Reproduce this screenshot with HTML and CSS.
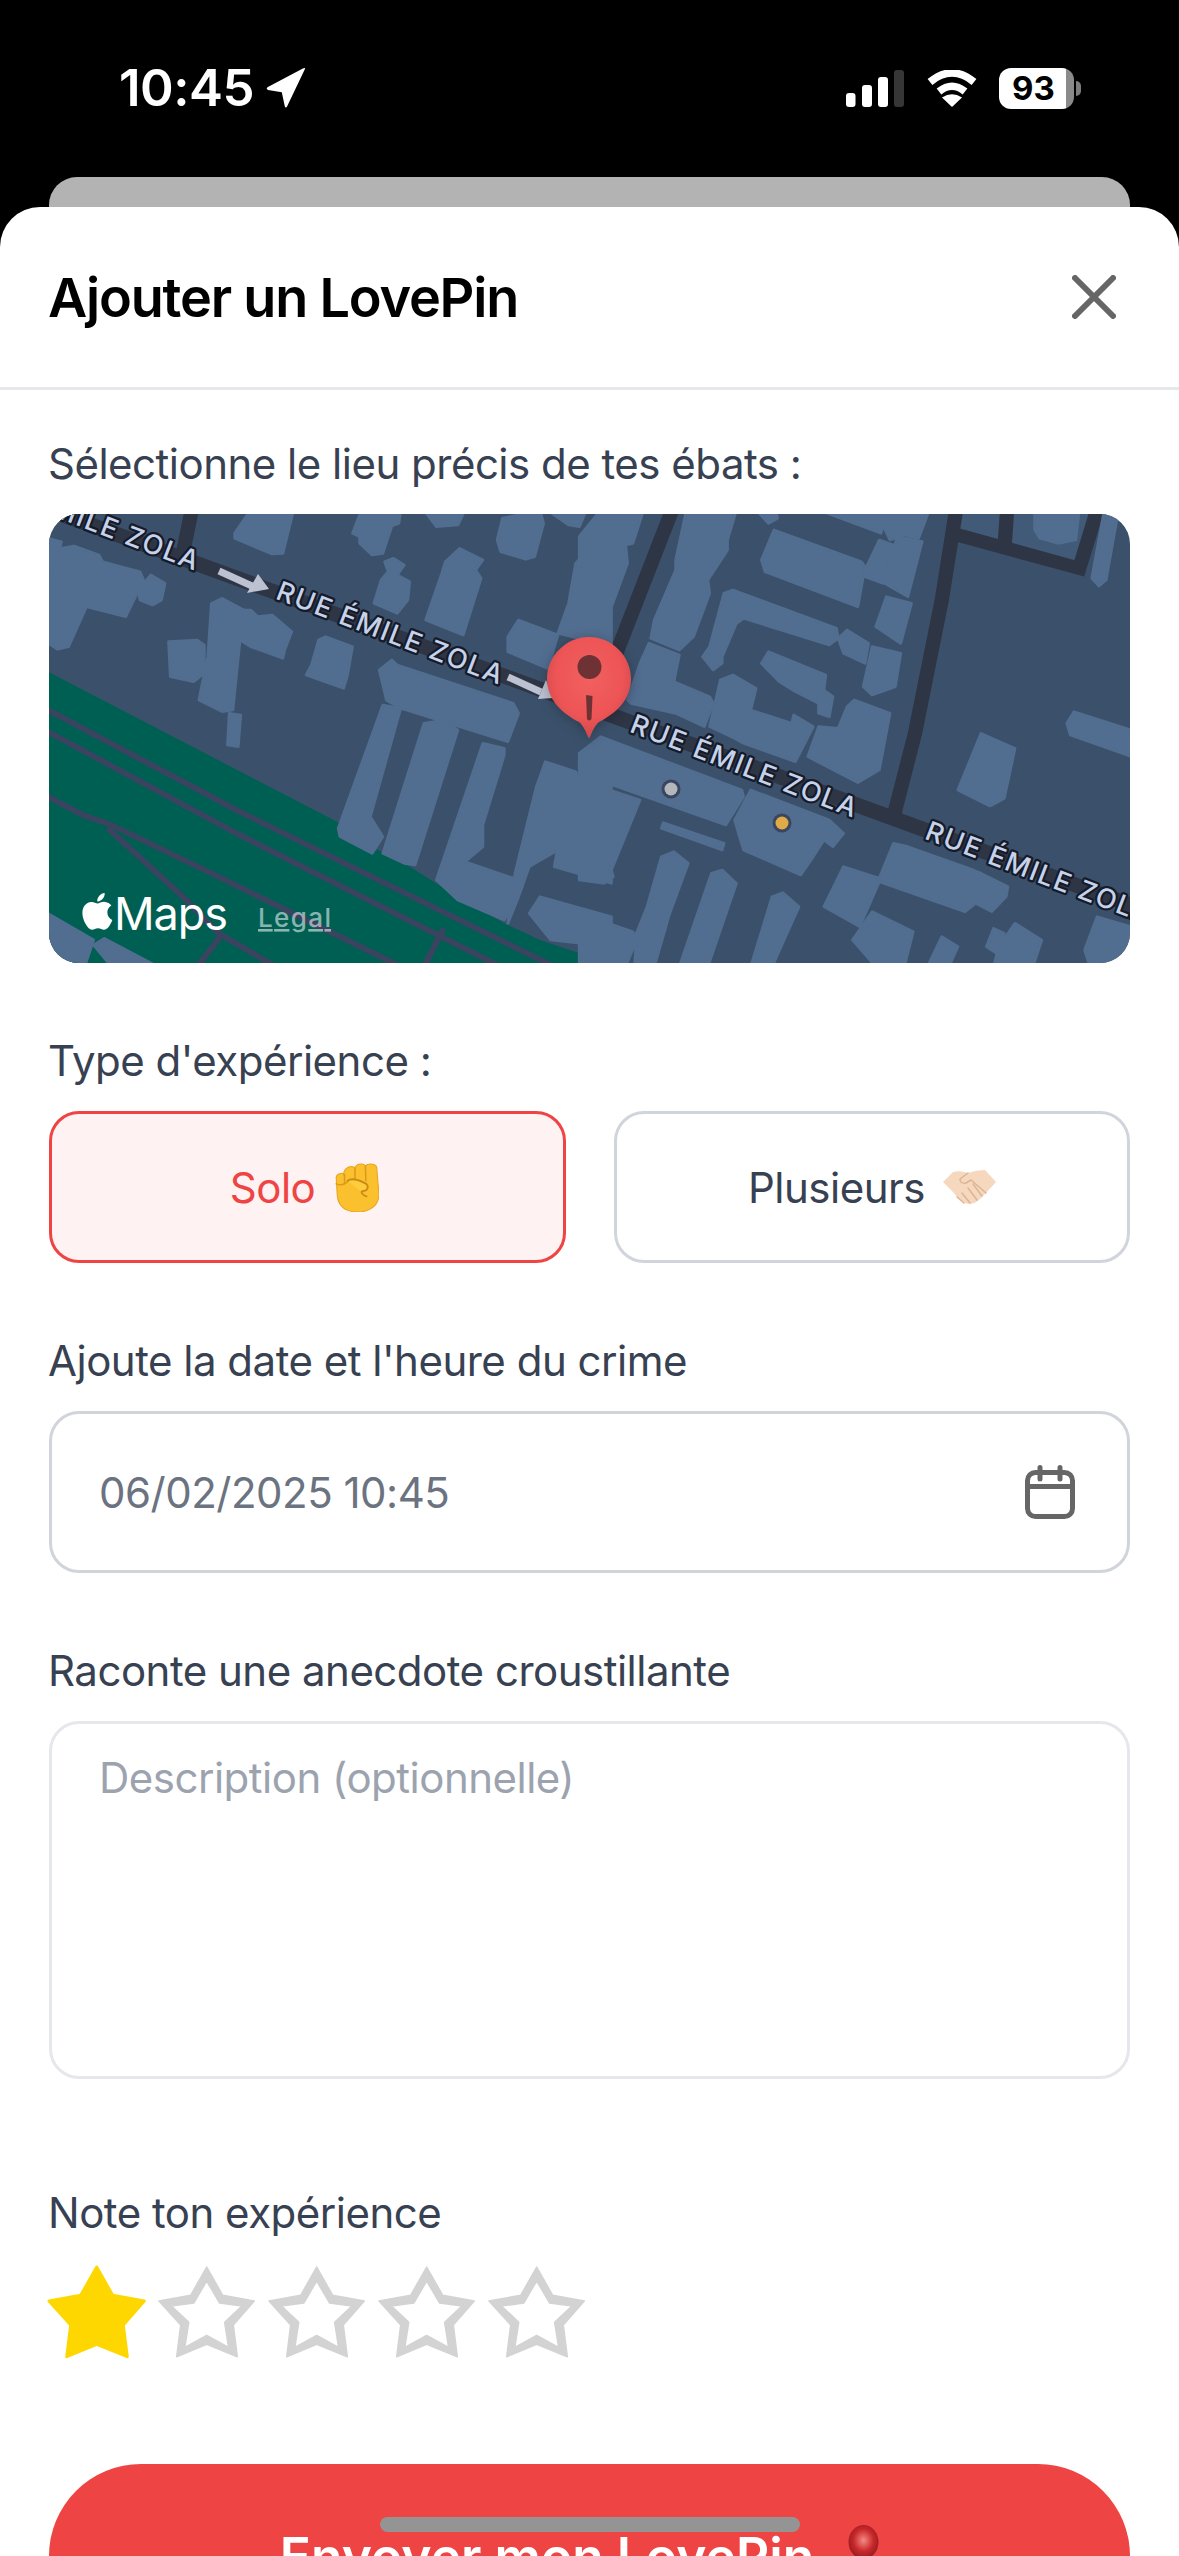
FILE: index.html
```html
<!DOCTYPE html>
<html lang="fr">
<head>
<meta charset="utf-8">
<title>Ajouter un LovePin</title>
<link rel="stylesheet" href="styles.css">
</head>
<body>
<svg class="defs" width="0" height="0" aria-hidden="true">
  <symbol id="star-full" viewBox="-2 -2 102 96">
    <path d="M48.7 1 L64.7 29.3 L96.3 35 L75.3 59 L79.3 90.7 L48.7 78.3 L18.7 90.7 L22.7 59 L1 35 L32.7 29.3Z" stroke-width="3" stroke-linejoin="round"/>
  </symbol>
  <symbol id="star-empty" viewBox="-2 -2 102 96">
    <path fill-rule="evenodd" stroke-width="1.500" stroke-linejoin="round" d="M48.7 1 L64.7 29.3 L96.3 35 L75.3 59 L79.3 90.7 L48.7 78.3 L18.7 90.7 L22.7 59 L1 35 L32.7 29.3Z M48.7 15 L35.8 37 L13.5 40 L30.8 56.2 L26.8 81.5 L48.7 69.5 L70.6 81.5 L66.6 56.2 L83.9 40 L61.6 37Z"/>
  </symbol>
</svg>
<div class="phone">
  <header class="status">
    <div class="status-left">
      <span class="clock">10:45</span>
      <svg class="loc" viewBox="0 0 38 38"><path d="M37 1 L20 36.5 Q18.6 38.6 17.8 36 L15 23 L2 21 Q-.5 19.6 1.8 18 L35 .5 Q38 -.6 37 1Z"/></svg>
    </div>
    <div class="status-right">
      <svg class="signal" viewBox="0 0 58 37">
        <rect class="on" x="0" y="23" width="9.500" height="14" rx="3"/>
        <rect class="on" x="16" y="15" width="10" height="22" rx="3"/>
        <rect class="on" x="32" y="7" width="10" height="30" rx="3"/>
        <rect class="off" x="48" y="0" width="10" height="37" rx="3"/>
      </svg>
      <svg class="wifi" viewBox="0 0 50 37">
        <path class="wifi-arc" d="M3 12 Q25 -6 47 12"/>
        <path class="wifi-arc" d="M12 21.500 Q25 11 38 21.500"/>
        <path class="wifi-dot" d="M25 37 L15 27.500 Q25 21 35 27.500Z"/>
      </svg>
      <div class="battery"><span class="battery-level">93</span></div>
    </div>
  </header>
  <div class="back-card"></div>
  <main class="sheet">
    <div class="sheet-head">
      <h1 class="title">Ajouter un LovePin</h1>
      <svg class="close" viewBox="0 0 44 44"><path d="M3 3 L41 41 M41 3 L3 41"/></svg>
    </div>
    <div class="form">
      <label class="label">Sélectionne le lieu précis de tes ébats :</label>
      <div class="map">
        <svg class="map-svg" viewBox="0 0 1081 449">
          <rect class="m-ground" width="1081" height="449"/>
          <g transform="translate(-9,-14) scale(.35714,.33333)">
            <path class="m-green" d="M22 515 L840 970 L835 990 L1020 1090 L1170 1190 L1300 1270 L1400 1320 L1568 1380 L1780 1440 L22 1440Z"/>
            <path class="m-rail" d="M22 630 L550 930 L1440 1400"/>
            <path class="m-rail" d="M22 695 L550 1000 L1290 1400"/>
            <path class="m-rail" d="M22 890 L120 945 L200 975 L500 1130 L1010 1400"/>
            <path class="m-rail" d="M190 985 L400 1190 L500 1300 L660 1400"/>
            <path class="m-rail" d="M440 1400 L505 1310"/>
            <path class="m-rail" d="M1130 1285 L1075 1400"/>
            <path class="m-road" d="M425 30 L400 160"/>
          </g>
          <g transform="translate(541,-14) scale(.35714,.33333)">
            <path class="m-lot" d="M1040 40 H1420 L1380 215 L1030 100Z"/>
            <path class="m-road" d="M230 30 L70 470"/>
            <path class="m-road" d="M1025 30 L985 300 L910 700 L850 950"/>
            <path class="m-road" d="M1030 105 L1370 205 L1420 30"/>
            <path class="m-road" d="M1168 30 L1160 150"/>
          </g>
          <path class="m-main" d="M-10 -8 L1095 396"/>
          <g class="m-b" transform="translate(-9,-14) scale(.35714,.33333)">
            <polygon points="545,100 590,30 710,30 680,160 650,162 545,115"/>
            <polygon points="875,100 900,30 1010,30 1005,70 985,78 960,160 930,165 895,130 895,110"/>
            <polygon points="1075,30 1190,30 1170,75 1110,80"/>
            <polygon points="1280,120 1295,55 1400,30 1410,70 1385,170 1360,178 1290,155"/>
            <polygon points="1420,30 1530,30 1510,80 1480,75"/>
            <polygon points="22,115 60,125 40,210 22,225"/>
            <polygon points="22,230 60,145 95,138 165,165 175,185 280,215 290,240 240,350 130,320 80,440 50,448 22,430"/>
            <polygon points="275,270 310,225 350,250 340,300 315,315 280,300"/>
            <polygon points="965,185 990,175 1020,195 1000,225 1035,245 1030,300 1000,340 935,310 955,240 975,215"/>
            <polygon points="1135,185 1175,145 1240,180 1220,210 1235,235 1185,405 1080,360 1125,220"/>
            <polygon points="1310,410 1340,360 1450,405 1430,480 1420,505 1310,455"/>
            <polygon points="1480,310 1500,190 1568,110 1600,110 1600,440 1450,400"/>
            <polygon points="480,310 510,295 570,330 590,330 610,350 650,345 705,395 685,450 680,475 590,440 560,420 540,630 510,635 445,600 470,470"/>
            <polygon points="360,425 440,420 460,435 460,520 430,545 365,530"/>
            <polygon points="760,495 780,420 800,410 875,440 860,530 850,565 745,525"/>
            <polygon points="530,640 562,645 555,740 525,735"/>
            <polygon points="950,510 985,480 1000,495 1325,610 1340,640 1310,725 1010,625 970,600"/>
            <polygon points="960,615 1010,625 925,950 960,1010 930,1060 840,1010 835,985"/>
            <polygon points="1075,670 1130,660 1170,690 1050,1095 1020,1090 960,1060"/>
            <polygon points="1240,730 1300,745 1300,765 1240,975 1240,1040 1190,1085 1340,1140 1350,1160 1300,1260 1170,1200 1110,1140"/>
            <polygon points="1370,1240 1400,1190 1600,1250 1600,1340 1430,1320"/>
            <polygon points="1390,860 1415,785 1500,815 1510,840 1450,1050 1370,1100 1340,1190 1310,1270 1330,1120"/>
            <polygon points="1500,830 1600,800 1600,1150 1440,1100 1450,1040"/>
            <polygon points="22,1240 150,1320 125,1400 22,1400"/>
            <polygon points="150,1335 180,1315 330,1400 200,1400"/>
          </g>
          <g class="m-b" transform="translate(541,-14) scale(.35714,.33333)">
            <polygon points="-30,110 30,30 150,30 120,130 100,135 105,190 50,350 30,370 -30,350"/>
            <polygon points="270,30 410,30 385,120 385,150 330,240 335,280 290,410 250,450 170,415 180,360 240,210 240,180"/>
            <polygon points="140,490 165,430 250,465 235,545 335,590 345,610 320,680 240,640 115,610 105,600"/>
            <polygon points="480,180 515,90 760,185 770,200 750,320 490,215"/>
            <polygon points="770,210 810,120 850,135 820,250 770,230"/>
            <polygon points="825,250 860,110 930,125 890,290"/>
            <polygon points="800,380 830,290 900,310 870,430"/>
            <polygon points="765,560 790,440 870,460 855,560 790,585"/>
            <polygon points="335,440 375,280 400,270 690,385 695,415 670,435 430,355 410,370 370,470 370,490 345,510 315,470"/>
            <polygon points="695,415 720,390 780,430 770,490 710,460"/>
            <polygon points="480,490 500,455 660,525 655,570 680,590 670,650 640,640 640,610 575,575 530,545"/>
            <polygon points="335,680 365,540 400,525 465,565 450,630 565,670 570,645 625,680 575,785 430,730 405,715"/>
            <polygon points="610,770 640,680 695,685 720,620 740,600 840,640 810,810 750,848"/>
            <polygon points="1030,870 1095,700 1190,745 1160,895 1120,918"/>
            <polygon points="1335,670 1355,635 1530,695 1530,775 1345,705"/>
            <polygon points="1245,90 1245,30 1370,30 1360,120 1310,130 1260,115"/>
            <polygon points="465,30 520,30 525,55 500,70"/>
            <polygon points="820,75 830,30 950,30 920,115 880,105 840,120"/>
            <polygon points="640,30 830,30 815,100"/>
            <polygon points="1405,235 1440,30 1480,30 1445,240 1425,258"/>
            <polygon points="-30,760 30,710 425,870 430,890 380,975 -30,820"/>
            <polygon points="405,960 450,870 670,960 710,1000 680,1040 655,1020 625,1070 590,1125 430,1050 420,1015"/>
            <polygon points="-30,840 140,900 60,1110 65,1130 40,1150 -30,1140"/>
            <polygon points="205,968 375,1030 370,1050 200,985"/>
            <polygon points="160,1220 200,1070 235,1055 275,1090 220,1250 210,1290 180,1400 125,1400 130,1300"/>
            <polygon points="250,1400 340,1120 370,1110 410,1150 330,1400"/>
            <polygon points="450,1400 510,1190 540,1178 585,1220 510,1400"/>
            <polygon points="-30,1240 120,1295 130,1320 100,1400 -30,1400"/>
            <polygon points="655,1220 710,1100 810,1135 850,1030 890,1040 1060,1105 1095,1120 1170,1160 1165,1190 1125,1235 1080,1210 1050,1235 810,1145 755,1280"/>
            <polygon points="735,1320 790,1235 905,1295 880,1400 800,1400"/>
            <polygon points="945,1400 985,1310 1030,1340 1005,1400"/>
            <polygon points="1110,1340 1130,1285 1160,1300 1145,1365"/>
            <polygon points="1145,1340 1190,1270 1265,1320 1240,1400 1130,1400"/>
            <polygon points="1385,1350 1420,1250 1530,1285 1530,1400 1400,1400"/>
          </g>
          <path class="m-arrow-line" d="M170 57 L203 72"/>
          <polygon class="m-arrow" points="209,60 220,75 198,79"/>
          <path class="m-arrow-line" d="M459 163 L492 178"/>
          <polygon class="m-arrow" points="497,166 504,184 489,185"/>
          <text class="m-label" transform="translate(148,50) rotate(21)" text-anchor="end" textLength="240" dy="7">RUE ÉMILE ZOLA</text>
          <text class="m-label" transform="translate(228,78) rotate(21)" textLength="240" dy="7">RUE ÉMILE ZOLA</text>
          <text class="m-label" transform="translate(582,211) rotate(21)" textLength="240" dy="7">RUE ÉMILE ZOLA</text>
          <text class="m-label" transform="translate(877,318) rotate(21)" textLength="240" dy="7">RUE ÉMILE ZOLA</text>
          <circle class="m-dot-ring" cx="622" cy="275" r="9.500"/>
          <circle class="m-dot-grey" cx="622" cy="275" r="6.500"/>
          <circle class="m-dot-ring" cx="733" cy="309" r="9.500"/>
          <circle class="m-dot-gold" cx="733" cy="309" r="6.500"/>
          <defs>
            <radialGradient id="pinfill" cx=".5" cy=".4" r=".62">
              <stop offset="0" stop-color="#f2605f"/>
              <stop offset=".65" stop-color="#ed5456"/>
              <stop offset="1" stop-color="#c9474a"/>
            </radialGradient>
          </defs>
          <path class="m-pin" d="M540 123 C563 123 582 142 582 165 C582 186 566 200 550 208 C546 211 543 218 541 223 Q540 225 539 223 C537 218 534 211 530 208 C514 200 498 186 498 165 C498 142 517 123 540 123Z"/>
          <circle class="m-pin-dark" cx="540.500" cy="153" r="12"/>
          <path class="m-pin-dark" d="M537 181 L543.500 182 L542.500 205 Q540 208 538 205Z"/>
          <path class="m-apple" transform="translate(30,379) scale(1.530)" d="M12.152 6.896c-.948 0-2.415-1.078-3.96-1.04-2.04.027-3.91 1.183-4.961 3.014-2.117 3.675-.546 9.103 1.519 12.09 1.013 1.454 2.208 3.09 3.792 3.039 1.52-.065 2.09-.987 3.935-.987 1.831 0 2.35.987 3.96.948 1.637-.026 2.676-1.48 3.676-2.948 1.156-1.688 1.636-3.325 1.662-3.415-.039-.013-3.182-1.221-3.22-4.857-.026-3.04 2.48-4.494 2.597-4.559-1.429-2.09-3.623-2.324-4.39-2.376-2-.156-3.675 1.090-4.61 1.090zM15.530 3.830c.843-1.012 1.400-2.427 1.245-3.830-1.207.052-2.662.805-3.532 1.818-.78.896-1.454 2.338-1.273 3.714 1.338.104 2.715-.688 3.559-1.701"/>
          <text class="m-maps" x="65" y="416" textLength="114">Maps</text>
          <text class="m-legal" x="209" y="413" textLength="73">Legal</text>
        </svg>
      </div>

      <label class="label label-gap">Type d'expérience :</label>
      <div class="choices">
        <button class="choice choice-on" type="button">
          <span>Solo</span>
          <svg class="fist" viewBox="0 0 44 47">
            <path class="f-base" d="M3 14 C3 10 9 9 10 11 C11 3 19 2 21 5 C22 0 30 0 31 3 C33 0 43 0 42 6 L44 30 C44 41 35 47 24 47 C12 47 5 42 4 31Z"/>
            <path class="f-line" d="M11 11 L11 20 M21 5 L21 17 M31 3 L31.500 17 M3 20 C8 22 12 20 14 18"/>
            <path class="f-thumb" d="M14 17 C18 14 24 16 30 19 C35 21 34 27 28 27 C26 28 29 31 32 32"/>
          </svg>
        </button>
        <button class="choice" type="button">
          <span>Plusieurs</span>
          <svg class="shake" viewBox="0 0 53 35">
            <path class="s-base" d="M0 12 L10 2 Q17 0 25 3 Q33 0 42 0 L53 12 L43 23 L37 29 Q30 36 22 33 L15 28 L10 22Z"/>
            <path class="s-line" d="M25 3 L17 9 Q17 14 23 13 L28 10 L43 23 M30 14 L39 26 M25 18 L34 30 M19 23 L27 33 M14 27 L21 33"/>
          </svg>
        </button>
      </div>

      <label class="label label-gap">Ajoute la date et l'heure du crime</label>
      <div class="field field-date">
        <span class="date-value">06/02/2025 10:45</span>
        <svg class="calendar" viewBox="0 0 50 54">
          <rect x="2.500" y="7.500" width="45" height="44" rx="8"/>
          <path d="M2.500 21.500 H47.500 M15 2.500 V14 M35 2.500 V14"/>
        </svg>
      </div>

      <label class="label label-gap">Raconte une anecdote croustillante</label>
      <div class="field field-area">Description (optionnelle)</div>

      <label class="label label-note">Note ton expérience</label>
      <div class="stars">
        <svg class="star star-on"><use href="#star-full"/></svg>
        <svg class="star star-off"><use href="#star-empty"/></svg>
        <svg class="star star-off"><use href="#star-empty"/></svg>
        <svg class="star star-off"><use href="#star-empty"/></svg>
        <svg class="star star-off"><use href="#star-empty"/></svg>
      </div>

      <button class="submit" type="button">
        <span>Envoyer mon LovePin</span>
        <svg class="pushpin" viewBox="0 0 31 62">
          <defs>
            <radialGradient id="ball" cx=".5" cy=".45" r=".6">
              <stop offset="0" stop-color="#f58a84"/>
              <stop offset=".55" stop-color="#c9282b"/>
              <stop offset="1" stop-color="#8a1a1e"/>
            </radialGradient>
          </defs>
          <rect x="13.500" y="28" width="4" height="30" fill="#8f8f8f"/>
          <ellipse cx="15.500" cy="17" rx="15" ry="17" fill="url(#ball)"/>
        </svg>
      </button>
    </div>
  </main>
  <div class="home-bar"></div>
</div>
</body>
</html>
```
FILE: styles.css
```css
* { box-sizing: border-box; }
html, body { margin: 0; padding: 0; background: #000; }
body { font-family: "Inter", "Liberation Sans", sans-serif; }
.defs { position: absolute; }
.phone { position: relative; width: 1179px; height: 2556px; overflow: hidden; background: #000; }

.status { height: 177px; padding: 67px 105px 0 119px; display: flex; justify-content: space-between; align-items: flex-start; color: #fff; }
.status-left { display: flex; align-items: center; gap: 12px; height: 42px; }
.clock { font-size: 51px; font-weight: 600; line-height: 42px; letter-spacing: -.5px; }
.loc { width: 40px; height: 40px; fill: #fff; }
.status-right { display: flex; align-items: center; height: 42px; }
.signal { width: 58px; height: 37px; margin-right: 23px; }
.signal .on { fill: #fff; }
.signal .off { fill: #363636; }
.wifi { width: 50px; height: 37px; margin-right: 22px; }
.wifi-arc { fill: none; stroke: #fff; stroke-width: 7.500; }
.wifi-dot { fill: #fff; }
.battery { position: relative; width: 75px; height: 41px; border-radius: 12px; background: linear-gradient(90deg, #fff 67px, #8a8a8a 67px); display: flex; align-items: center; padding-left: 13px; }
.battery::after { content: ""; position: absolute; right: -7px; top: 13px; width: 5px; height: 15px; border-radius: 0 8px 8px 0; background: #7d7d7d; }
.battery-level { color: #000; font-size: 33px; font-weight: 700; line-height: 1; }

.back-card { height: 30px; margin: 0 49px; background: #b3b3b3; border-radius: 28px 28px 0 0; }

.sheet { height: 2349px; background: #fff; border-radius: 40px 40px 0 0; overflow: hidden; }
.sheet-head { height: 183px; border-bottom: 3px solid #e5e7eb; padding: 0 63px 0 48px; display: flex; align-items: center; justify-content: space-between; }
.title { margin: 2px 0 0; font-size: 54px; font-weight: 600; line-height: 1; color: #000; letter-spacing: -1.2px; }
.close { width: 44px; height: 44px; fill: none; stroke: #666; stroke-width: 6; stroke-linecap: round; }

.form { padding: 44px 49px 0; }
.label { display: block; font-size: 42px; line-height: 60px; color: #374151; margin: 0 0 20px -1px; letter-spacing: -.5px; }
.label-gap { margin-top: 68px; }
.label-note { margin-top: 104px; margin-bottom: 21px; }

.map { height: 449px; border-radius: 30px; overflow: hidden; }
.map-svg { display: block; width: 1081px; height: 449px; }
.m-ground { fill: #3b516b; }
.m-green { fill: #005f53; }
.m-lot { fill: #415a78; }
.m-rail { fill: none; stroke: #3a4460; stroke-width: 17; }
.m-road { fill: none; stroke: #2e3545; stroke-width: 40; }
.m-main { fill: none; stroke: #2e3545; stroke-width: 15; }
.m-b polygon { fill: #516d90; stroke: #516d90; stroke-width: 8; stroke-linejoin: round; }
.m-arrow-line { fill: none; stroke: #bcc2d2; stroke-width: 7; }
.m-arrow { fill: #bcc2d2; }
.m-label { font-family: "Inter", sans-serif; font-size: 27px; font-weight: 500; fill: #c5d2ea; stroke: #151b28; stroke-width: 4.500; stroke-linejoin: round; paint-order: stroke; }
.m-dot-ring { fill: #3a4660; }
.m-dot-grey { fill: #b4b8bd; }
.m-dot-gold { fill: #e0ab47; }
.m-pin { fill: url(#pinfill); filter: drop-shadow(0 2px 6px rgba(0, 0, 0, .25)); }
.m-pin-dark { fill: #6e3235; }
.m-apple { fill: #fff; }
.m-maps { font-family: "Inter", sans-serif; font-size: 45px; fill: #fff; }
.m-legal { font-family: "Inter", sans-serif; font-size: 26px; font-weight: 500; fill: rgba(255,255,255,.55); text-decoration: underline; }

.choices { display: flex; justify-content: space-between; }
.choice { width: 517px; height: 152px; border: 3px solid #d1d5db; border-radius: 30px; background: #fff; color: #374151; font-family: inherit; font-size: 42px; letter-spacing: -.5px; display: flex; align-items: center; justify-content: center; gap: 18px; padding: 0; }
.choice-on { width: 517px; border-color: #ef4444; background: #fef2f2; color: #ef4444; padding-right: 6px; }
.choices .choice:last-child { width: 516px; }
.fist { width: 46px; height: 49px; }
.f-base { fill: #fbc02d; stroke: #e8a41e; stroke-width: 1; }
.f-line { fill: none; stroke: #de9a1a; stroke-width: 1.500; stroke-linecap: round; }
.f-thumb { fill: #fdcd3c; stroke: #c98a16; stroke-width: 1.800; stroke-linecap: round; }
.shake { width: 53px; height: 35px; }
.s-base { fill: #f6d8bf; }
.s-line { fill: none; stroke: #dcb595; stroke-width: 1.500; stroke-linecap: round; stroke-linejoin: round; }

.field { border: 3px solid #d1d5db; border-radius: 30px; padding: 0 47px; font-size: 42px; letter-spacing: -.5px; }
.field-date { height: 162px; display: flex; align-items: center; justify-content: space-between; padding-right: 52px; }
.date-value { color: #6b7280; }
.calendar { width: 50px; height: 54px; fill: none; stroke: #666; stroke-width: 5; stroke-linecap: round; }
.field-area { height: 358px; border-color: #e5e7eb; color: #9ca3af; padding-top: 24px; line-height: 60px; }

.stars { display: flex; gap: 8px; margin-left: -3px; height: 96px; }
.star { width: 102px; height: 96px; }
.star-on { fill: #ffd700; stroke: #ffd700; }
.star-off { fill: #d3d3d3; stroke: #d3d3d3; }

.submit { margin-top: 104px; width: 1081px; height: 184px; border: 0; border-radius: 92px; background: #ef4444; color: #fff; font-family: inherit; font-size: 51.500px; font-weight: 600; display: flex; align-items: center; justify-content: center; gap: 34px; padding: 0 20px 0 0; }
.pushpin { width: 31px; height: 62px; }

.home-bar { position: absolute; left: 380px; top: 2517px; width: 420px; height: 15px; border-radius: 8px; background: #949494; }
```
